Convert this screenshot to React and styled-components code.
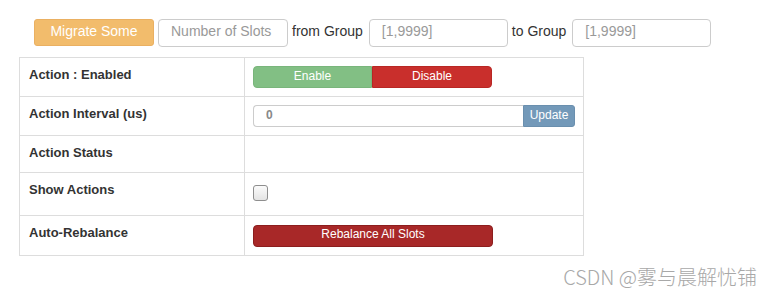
import styled, { createGlobalStyle } from "styled-components";

const GlobalStyle = createGlobalStyle`
  html, body {
    margin: 0;
    padding: 0;
    background: #fff;
  }
  body {
    font-family: "Liberation Sans", Arial, sans-serif;
    color: #333;
  }
`

const Page = styled.div`
  position: relative;
  height: 295px;
  box-sizing: border-box;
  padding: 19px 0 0 19px;
  border-left: 2px solid #f5f5f5;
  margin-left: -2px;
  overflow: hidden;
`

const Toolbar = styled.div`
  display: flex;
  align-items: center;
  margin-left: 15px;
  height: 28px;
`

const OrangeButton = styled.button`
  width: 120px;
  height: 27px;
  margin-top: -1px;
  padding: 0 0 4px;
  border: 1px solid #eab062;
  border-radius: 3px;
  background: #f2bc6c;
  color: #fff;
  font-family: inherit;
  font-size: 14px;
  cursor: pointer;
`

const TextInput = styled.input`
  box-sizing: border-box;
  width: ${(props) => props.wide ? '139px' : '130px'};
  height: 28px;
  margin-left: ${(props) => props.wide ? '6px' : '4px'};
  padding: 0 12px 4px;
  border: 1px solid #ccc;
  border-radius: 4px;
  font-family: inherit;
  font-size: 14px;
  color: #555;
  outline: none;
  &::placeholder {
    color: #999;
  }
`

const Caption = styled.span`
  margin-left: 4px;
  margin-bottom: 4px;
  font-size: 14px;
  color: #333;
`

const Table = styled.table`
  margin-top: 10px;
  width: 565px;
  table-layout: fixed;
  border-collapse: collapse;
  border: 1px solid #ddd;
  font-size: 13px;
`

const Row = styled.tr`
  border-top: 1px solid #ddd;
`

const Label = styled.th`
  width: 225px;
  box-sizing: border-box;
  padding: 7px 9px 7px;
  border-right: 1px solid #ddd;
  vertical-align: top;
  text-align: left;
  font-weight: bold;
  line-height: 20px;
  color: #333;
`

const Value = styled.td`
  padding: 8px 8px;
  vertical-align: top;
  line-height: 20px;
  height: ${(props) => props.h || 20}px;
`

const Group = styled.div`
  display: flex;
`

const Btn = styled.button`
  box-sizing: border-box;
  width: ${(props) => props.w}px;
  height: 22px;
  padding: 0 0 3px;
  border: 1px solid ${(props) => props.edge};
  background: ${(props) => props.bg};
  color: #fff;
  font-family: inherit;
  font-size: 12px;
  line-height: 16px;
  border-radius: ${(props) => props.radius || '4px'};
  cursor: pointer;
`

const IntervalInput = styled.input`
  box-sizing: border-box;
  width: 270px;
  height: 22px;
  padding: 0 12px 2px;
  border: 1px solid #ccc;
  border-right: none;
  border-radius: 4px 0 0 4px;
  font-family: inherit;
  font-size: 12px;
  font-weight: bold;
  color: #888;
  outline: none;
`

const Check = styled.input`
  appearance: none;
  display: block;
  box-sizing: border-box;
  width: 15px;
  height: 16px;
  margin: 4px 0 6px;
  border: 1px solid #8e8e8e;
  border-radius: 3px;
  background: linear-gradient(#fbfbfb, #e4e4e4);
`

const Watermark = styled.div`
  position: absolute;
  right: 11px;
  bottom: 4px;
  font-family: "Noto Sans CJK SC", "Noto Sans", sans-serif;
  font-size: 20px;
  font-weight: 300;
  color: #a8a8a8;
`

export default function App() {
  return (
    <>
      <GlobalStyle />
      <Page>
        <Toolbar>
          <OrangeButton>Migrate Some</OrangeButton>
          <TextInput placeholder="Number of Slots" />
          <Caption>from Group</Caption>
          <TextInput wide placeholder="[1,9999]" />
          <Caption>to Group</Caption>
          <TextInput wide placeholder="[1,9999]" />
        </Toolbar>
        <Table>
          <tbody>
            <Row>
              <Label>Action : Enabled</Label>
              <Value h={22}>
                <Group>
                  <Btn w={119} bg="#82bf84" edge="#79b57b" radius="4px 0 0 4px">Enable</Btn>
                  <Btn w={120} bg="#c92f2c" edge="#b82724" radius="0 4px 4px 0">Disable</Btn>
                </Group>
              </Value>
            </Row>
            <Row>
              <Label>Action Interval (us)</Label>
              <Value h={22}>
                <Group>
                  <IntervalInput defaultValue="0" />
                  <Btn w={52} bg="#7399b9" edge="#6a8fae" radius="0 3px 3px 0">Update</Btn>
                </Group>
              </Value>
            </Row>
            <Row>
              <Label>Action Status</Label>
              <Value />
            </Row>
            <Row>
              <Label>Show Actions</Label>
              <Value h={26}>
                <Check type="checkbox" />
              </Value>
            </Row>
            <Row>
              <Label>Auto-Rebalance</Label>
              <Value h={22}>
                <Btn w={240} bg="#a82828" edge="#8c1e1e">Rebalance All Slots</Btn>
              </Value>
            </Row>
          </tbody>
        </Table>
        <Watermark>CSDN @雾与晨解忧铺</Watermark>
      </Page>
    </>
  );
}
